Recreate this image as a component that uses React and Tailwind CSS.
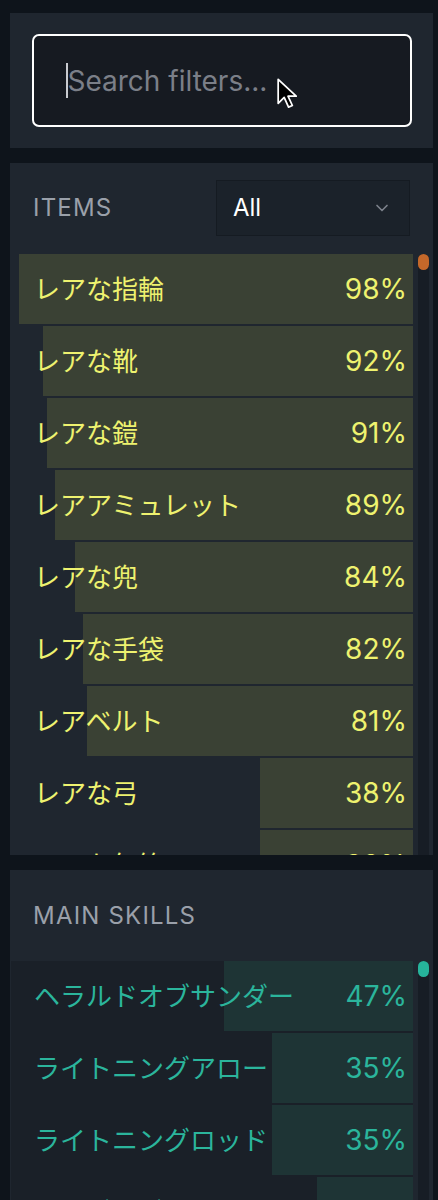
import { ChevronDown } from 'lucide-react';

const items = [
    { name: 'レアな指輪', pct: 98 },
    { name: 'レアな靴', pct: 92 },
    { name: 'レアな鎧', pct: 91 },
    { name: 'レアアミュレット', pct: 89 },
    { name: 'レアな兜', pct: 84 },
    { name: 'レアな手袋', pct: 82 },
    { name: 'レアベルト', pct: 81 },
    { name: 'レアな弓', pct: 38 },
    { name: 'レアな矢筒', pct: 38 },
];

const skills = [
    { name: 'ヘラルドオブサンダー', pct: 47 },
    { name: 'ライトニングアロー', pct: 35 },
    { name: 'ライトニングロッド', pct: 35 },
    { name: 'オーブオブストーム', pct: 24 },
];

const font = { fontFamily: 'Inter, "Noto Sans CJK JP", sans-serif' };

function BarRow({ name, pct, bar, text }) {
    return (
        <div className="relative h-[70px] flex items-center justify-between pl-[23px] pr-[6px]">
            {/* bar grows from the right edge */}
            <div className={`absolute right-0 top-0 bottom-0 ${bar}`} style={{ width: `${pct}%` }} />
            <span className={`relative text-[26px] ${text}`}>{name}</span>
            <span className={`relative text-[28px] ${text}`}>{pct}%</span>
        </div>
    );
}

function Scrollbar({ thumb }) {
    return (
        <div className="w-[11px] ml-[5px] self-stretch bg-[#171d25] rounded-full relative">
            <div className={`absolute top-0 left-0 w-[11px] h-[16px] rounded-full ${thumb}`} />
        </div>
    );
}

export default function App() {
    return (
        <div className="min-h-[1200px] bg-[#0e141b] pt-[13px] pl-[10px] pr-[5px] flex flex-col gap-[15px] overflow-hidden" style={font}>
            {/* Search */}
            <div className="bg-[#1f262f] h-[135px] px-[22px] pt-[21px]">
                <div className="relative h-[93px] w-[380px] border-2 border-white rounded-[7px] bg-[#161a21] flex items-center pl-[32px]">
                    <div className="w-[1.5px] h-[35px] bg-[#c9cbd0]" />
                    <span className="text-[28px] text-[#7b7f88]">Search filters...</span>
                    <svg className="absolute left-[242px] top-[41px]" width="24" height="33" viewBox="0 0 22 30">
                        <path d="M2 2 L2 24 L7.5 18.5 L11.5 27.5 L15 26 L11 17.5 L18.5 17.5 Z" fill="#000" stroke="#fff" strokeWidth="1.6" strokeLinejoin="round" />
                    </svg>
                </div>
            </div>

            {/* Items */}
            <div className="bg-[#1f262f] h-[692px] overflow-hidden">
                <div className="flex items-center justify-between pl-[23px] pr-[23px] pt-[17px] h-[91px] pb-[18px]">
                    <span className="text-[24px] tracking-[0.05em] text-[#9aa0aa]">ITEMS</span>
                    <div className="w-[194px] h-[56px] bg-[#1b222a] border border-[#151b22] flex items-center justify-between pl-[16px] pr-[17px]">
                        <span className="text-[24px] text-white">All</span>
                        <ChevronDown className="w-[20px] h-[20px] text-[#7c828b]" strokeWidth={2} />
                    </div>
                </div>
                <div className="flex pl-[1px]">
                    <div className="w-[402px] flex flex-col gap-[2px]">
                        {items.map((it) => (
                            <BarRow key={it.name} {...it} bar="bg-[#3a4134]" text="text-[#eef26f]" />
                        ))}
                    </div>
                    <Scrollbar thumb="bg-[#c4682a]" />
                </div>
            </div>

            {/* Main skills */}
            <div className="bg-[#1f262f] h-[330px] overflow-hidden">
                <div className="flex items-center pl-[23px] h-[91px]">
                    <span className="text-[24px] tracking-[0.05em] text-[#9aa0aa]">MAIN SKILLS</span>
                </div>
                <div className="flex pl-[1px]">
                    <div className="w-[402px] flex flex-col gap-[2px] bg-[#1a2028]">
                        {skills.map((it) => (
                            <BarRow key={it.name} {...it} bar="bg-[#1e3435]" text="text-[#2bb59c]" />
                        ))}
                    </div>
                    <Scrollbar thumb="bg-[#26b39b]" />
                </div>
            </div>
        </div>
    );
}
